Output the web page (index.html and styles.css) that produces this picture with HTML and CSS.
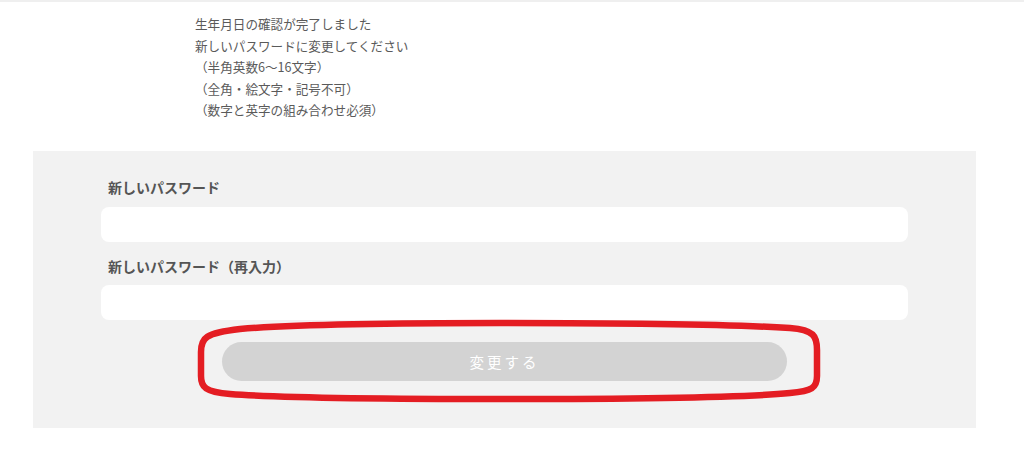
FILE: index.html
```html
<!DOCTYPE html>
<html lang="ja">
<head>
    <meta charset="utf-8">
    <title>パスワード変更</title>
    <link rel="stylesheet" href="styles.css">
</head>
<body>
    <div class="message">
        <p>生年月日の確認が完了しました</p>
        <p>新しいパスワードに変更してください</p>
        <p>（半角英数6～16文字）</p>
        <p>（全角・絵文字・記号不可）</p>
        <p>（数字と英字の組み合わせ必須）</p>
    </div>
    <div class="form-box">
        <form name="pwform" action="" method="POST">
            <p class="label">新しいパスワード</p>
            <input type="password" name="password" class="field">
            <p class="label">新しいパスワード（再入力）</p>
            <input type="password" name="password2" class="field">
            <div class="button-wrap">
                <button type="submit" class="button" disabled>変更する</button>
                <svg class="mark" width="630" height="86" viewBox="0 0 630 86">
                    <path d="M6 33 C6 19 10 14 45 10 C105 5 185 4 305 4 C445 4 545 6 595 9 C619 11 622 17 622 31 L622 57 C622 69 617 72 595 74 C545 79 445 80 305 80 C165 80 85 79 35 75 C10 73 6 68 6 57 Z" fill="none" stroke="#e41d23" stroke-width="6.5"/>
                </svg>
            </div>
        </form>
    </div>
</body>
</html>
```

FILE: styles.css
```css
body {
    margin: 0;
    padding: 0;
    border-top: 2px solid #efefef;
    background: #ffffff;
    font-family: "Noto Sans CJK JP", "Noto Sans", sans-serif;
    color: #555555;
}
.message {
    padding: 11px 0 0 195px;
}
.message p {
    margin: 0;
    font-size: 12.6px;
    line-height: 21.5px;
    color: #5a5a5a;
}
.form-box {
    margin: 30px 0 0 33px;
    width: 943px;
    height: 277px;
    box-sizing: border-box;
    background: #f2f2f2;
    padding: 26px 68px 0;
}
.label {
    margin: 0 0 10px 7px;
    font-size: 14px;
    line-height: 20px;
    font-weight: bold;
    color: #555555;
}
.field {
    display: block;
    width: 100%;
    height: 35px;
    box-sizing: border-box;
    border: none;
    border-radius: 8px;
    background: #ffffff;
    outline: none;
    margin-bottom: 14px;
}
.field + .label {
    margin-bottom: 9px;
}
.button-wrap {
    position: relative;
    width: 565px;
    margin: 22px auto 0;
}
.button {
    display: block;
    width: 565px;
    height: 39px;
    border: none;
    border-radius: 20px;
    background: #d3d3d3;
    color: #ffffff;
    font-family: "Noto Sans CJK JP", sans-serif;
    font-size: 14.5px;
    letter-spacing: 3px;
}
.mark {
    position: absolute;
    left: -27px;
    top: -23px;
}
```
